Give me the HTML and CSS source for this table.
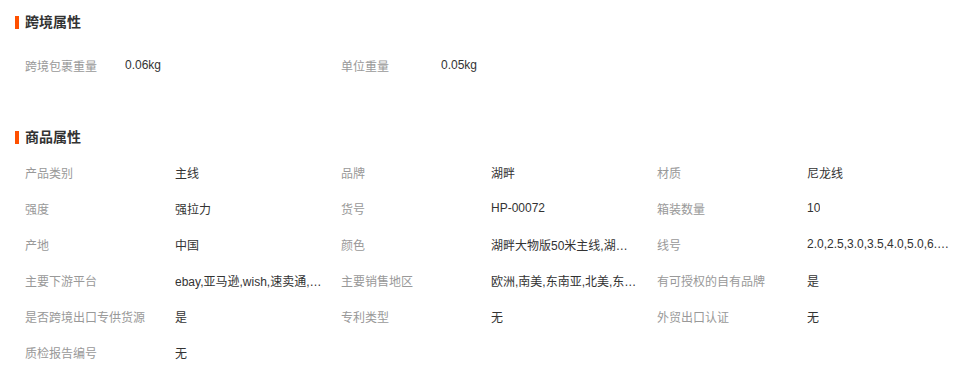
FILE: index.html
```html
<!DOCTYPE html>
<html lang="zh">
<head>
<meta charset="utf-8">
<link rel="stylesheet" href="styles.css">
</head>
<body>
<div class="page">
  <section class="sec sec-cross">
    <h2 class="title">跨境属性</h2>
    <div class="grid cross">
      <div class="cell"><span class="label">跨境包裹重量</span><span class="value">0.06kg</span></div>
      <div class="cell"><span class="label">单位重量</span><span class="value">0.05kg</span></div>
    </div>
  </section>
  <section class="sec sec-goods">
    <h2 class="title">商品属性</h2>
    <div class="grid goods">
      <div class="cell"><span class="label">产品类别</span><span class="value">主线</span></div>
      <div class="cell"><span class="label">品牌</span><span class="value">湖畔</span></div>
      <div class="cell"><span class="label">材质</span><span class="value">尼龙线</span></div>
      <div class="cell"><span class="label">强度</span><span class="value">强拉力</span></div>
      <div class="cell"><span class="label">货号</span><span class="value">HP-00072</span></div>
      <div class="cell"><span class="label">箱装数量</span><span class="value">10</span></div>
      <div class="cell"><span class="label">产地</span><span class="value">中国</span></div>
      <div class="cell"><span class="label">颜色</span><span class="value">湖畔大物版50米主线,湖畔大物版100米主线</span></div>
      <div class="cell"><span class="label">线号</span><span class="value">2.0,2.5,3.0,3.5,4.0,5.0,6.0,8.0</span></div>
      <div class="cell"><span class="label">主要下游平台</span><span class="value">ebay,亚马逊,wish,速卖通,独立站</span></div>
      <div class="cell"><span class="label">主要销售地区</span><span class="value">欧洲,南美,东南亚,北美,东北亚,中东</span></div>
      <div class="cell"><span class="label">有可授权的自有品牌</span><span class="value">是</span></div>
      <div class="cell"><span class="label">是否跨境出口专供货源</span><span class="value">是</span></div>
      <div class="cell"><span class="label">专利类型</span><span class="value">无</span></div>
      <div class="cell"><span class="label">外贸出口认证</span><span class="value">无</span></div>
      <div class="cell"><span class="label">质检报告编号</span><span class="value">无</span></div>
    </div>
  </section>
</div>
</body>
</html>
```

FILE: styles.css
```css
html, body {
  margin: 0;
  padding: 0;
  background: #fff;
}
body {
  font-family: Tahoma, "Liberation Sans", "Noto Sans CJK SC", sans-serif;
  font-size: 12px;
  color: #333;
}
.page {
  padding: 8px 0 0 15px;
}
.title {
  margin: 0;
  height: 28px;
  line-height: 28px;
  font-size: 14px;
  font-weight: bold;
  color: #333;
  display: flex;
  align-items: center;
  gap: 6px;
}
.title::before {
  content: "";
  width: 4px;
  height: 13px;
  background: #ff5000;
}
.grid {
  display: grid;
  grid-template-columns: repeat(3, 316px);
  padding-left: 10px;
}
.cross {
  margin-top: 11px;
}
.sec-goods {
  margin-top: 40px;
}
.goods {
  margin-top: 3px;
}
.cell {
  display: flex;
  align-items: center;
  height: 36px;
  min-width: 0;
}
.label {
  width: 150px;
  flex: none;
  color: #999;
  white-space: nowrap;
}
.cross .label {
  width: 100px;
}
.value {
  max-width: 148px;
  white-space: nowrap;
  overflow: hidden;
  text-overflow: ellipsis;
  color: #333;
}
```
